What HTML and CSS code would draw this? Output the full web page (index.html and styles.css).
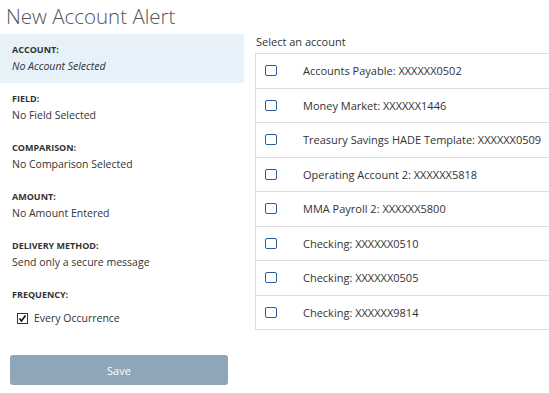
FILE: index.html
```html
<!DOCTYPE html>
<html lang="en">
<head>
    <meta charset="UTF-8">
    <title>New Account Alert</title>
    <link rel="stylesheet" href="styles.css">
</head>
<body>
    <h1 class="title">New Account Alert</h1>
    <div class="layout">
        <div class="summary">
            <div class="section active">
                <div class="label">Account:</div>
                <div class="value empty">No Account Selected</div>
            </div>
            <div class="section">
                <div class="label">Field:</div>
                <div class="value">No Field Selected</div>
            </div>
            <div class="section">
                <div class="label">Comparison:</div>
                <div class="value">No Comparison Selected</div>
            </div>
            <div class="section">
                <div class="label">Amount:</div>
                <div class="value">No Amount Entered</div>
            </div>
            <div class="section">
                <div class="label">Delivery Method:</div>
                <div class="value">Send only a secure message</div>
            </div>
            <div class="section">
                <div class="label">Frequency:</div>
                <div class="value freq">
                    <span class="tick">
                        <svg width="9" height="9" viewBox="0 0 9 9"><path d="M1.5 4.5 L3.5 7 L7.5 1.5" fill="none" stroke="#111" stroke-width="1.6"/></svg>
                    </span>
                    Every Occurrence
                </div>
            </div>
            <button class="save">Save</button>
        </div>
        <div class="accounts">
            <div class="caption">Select an account</div>
            <ul class="list">
                <li><span class="box"></span>Accounts Payable: XXXXXX0502</li>
                <li><span class="box"></span>Money Market: XXXXXX1446</li>
                <li><span class="box"></span>Treasury Savings HADE Template: XXXXXX0509</li>
                <li><span class="box"></span>Operating Account 2: XXXXXX5818</li>
                <li><span class="box"></span>MMA Payroll 2: XXXXXX5800</li>
                <li><span class="box"></span>Checking: XXXXXX0510</li>
                <li><span class="box"></span>Checking: XXXXXX0505</li>
                <li><span class="box"></span>Checking: XXXXXX9814</li>
            </ul>
        </div>
    </div>
</body>
</html>
```

FILE: styles.css
```css
body {
    margin: 0;
    font-family: "Open Sans", Arial, sans-serif;
    color: #333;
    overflow: hidden;
}
.title {
    margin: 0;
    padding: 3px 0 0 6px;
    height: 31px;
    font-size: 20.5px;
    font-weight: 300;
    color: #555;
    line-height: 26px;
}
.layout {
    display: flex;
    gap: 11px;
}
.summary {
    width: 244px;
    flex-shrink: 0;
}
.section {
    padding: 9px 12px 0;
    height: 40px;
}
.section.active {
    background: #e7f1fa;
}
.label {
    font-size: 9px;
    font-weight: 700;
    text-transform: uppercase;
    line-height: 14px;
    margin-bottom: 1px;
}
.value {
    font-size: 10.5px;
    line-height: 16px;
}
.value.empty {
    font-style: italic;
}
.freq {
    display: flex;
    align-items: center;
    gap: 6px;
    padding: 7px 0 0 5px;
}
.tick {
    width: 9px;
    height: 9px;
    border: 1px solid #333;
    display: flex;
    align-items: center;
    justify-content: center;
    background: #fff;
}
.save {
    display: block;
    margin: 27px 0 0 10px;
    width: 218px;
    height: 30px;
    border: none;
    border-radius: 3px;
    background: #8fa6b8;
    color: #fff;
    font-family: inherit;
    font-size: 11px;
}
.accounts {
    flex: 1;
}
.caption {
    font-size: 11px;
    line-height: 14px;
    margin-top: 1px;
    height: 18px;
    padding-left: 1px;
}
.list {
    list-style: none;
    margin: 0;
    padding: 0;
    border: 1px solid #ddd;
    border-right: none;
    width: 310px;
}
.list li {
    height: 33.5px;
    display: flex;
    align-items: center;
    font-size: 11px;
    border-top: 1px solid #ddd;
    padding-left: 9px;
}
.list li:first-child {
    border-top: none;
}
.box {
    width: 10px;
    height: 9px;
    border: 1.5px solid #2c5d96;
    border-radius: 2px;
    margin-right: 26px;
}
```
